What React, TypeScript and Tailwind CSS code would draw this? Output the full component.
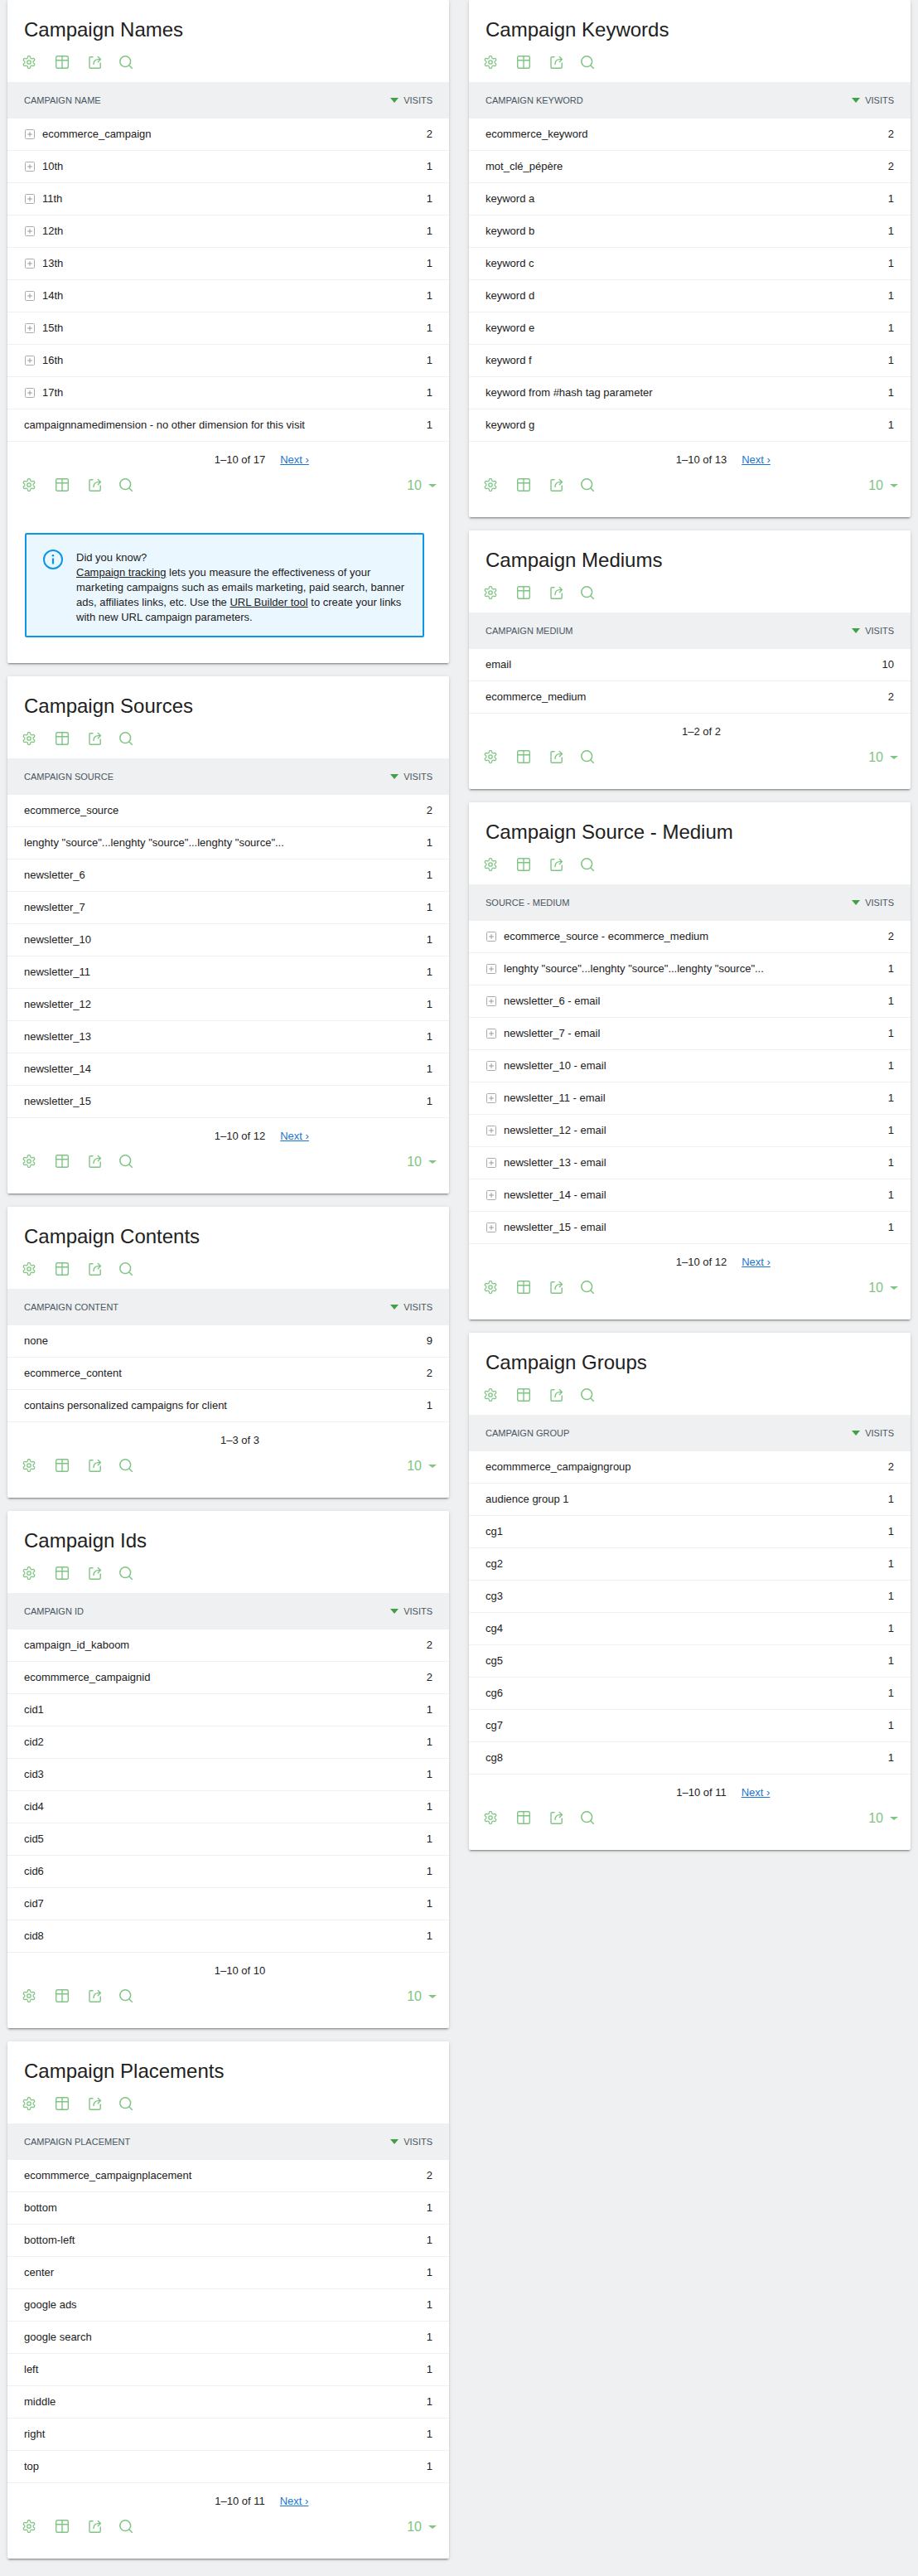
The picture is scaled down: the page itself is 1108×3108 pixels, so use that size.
import React from "react";

type Row = [string, number];
type CardProps = {
  title: string;
  dim: string;
  rows: Row[];
  range: string;
  next?: boolean;
  plus?: number;
  info?: boolean;
};

function Gear() {
  return (
    <svg width="16" height="16" viewBox="1.2 1.2 21.6 21.6" fill="none" stroke="#7fc583" strokeWidth="1.7" strokeLinecap="round" strokeLinejoin="round">
      <path d="M12.22 2h-.44a2 2 0 0 0-2 2v.18a2 2 0 0 1-1 1.73l-.43.25a2 2 0 0 1-2 0l-.15-.08a2 2 0 0 0-2.73.73l-.22.38a2 2 0 0 0 .73 2.73l.15.1a2 2 0 0 1 1 1.72v.51a2 2 0 0 1-1 1.74l-.15.09a2 2 0 0 0-.73 2.73l.22.38a2 2 0 0 0 2.73.73l.15-.08a2 2 0 0 1 2 0l.43.25a2 2 0 0 1 1 1.73V20a2 2 0 0 0 2 2h.44a2 2 0 0 0 2-2v-.18a2 2 0 0 1 1-1.73l.43-.25a2 2 0 0 1 2 0l.15.08a2 2 0 0 0 2.73-.73l.22-.39a2 2 0 0 0-.73-2.73l-.15-.08a2 2 0 0 1-1-1.74v-.5a2 2 0 0 1 1-1.74l.15-.09a2 2 0 0 0 .73-2.73l-.22-.38a2 2 0 0 0-2.73-.73l-.15.08a2 2 0 0 1-2 0l-.43-.25a2 2 0 0 1-1-1.73V4a2 2 0 0 0-2-2z" />
      <circle cx="12" cy="12" r="3" />
    </svg>
  );
}

function TableIcon() {
  return (
    <svg width="16" height="16" viewBox="0 0 16 16" fill="none" stroke="#7fc583" strokeWidth="1.4">
      <rect x="0.7" y="0.7" width="14.6" height="14.6" rx="1.5" />
      <path d="M0.7 5.7H15.3M8 0.7V15.3" />
    </svg>
  );
}

function ShareIcon() {
  return (
    <svg width="16" height="16" viewBox="0 0 16 16" fill="none" stroke="#7fc583" strokeWidth="1.4" strokeLinecap="round" strokeLinejoin="round">
      <path d="M5 1.7H2.2a1.2 1.2 0 0 0-1.2 1.2V14a1.2 1.2 0 0 0 1.2 1.2H13a1.2 1.2 0 0 0 1.2-1.2V9" />
      <path d="M6 10.5C6 7 8 4.6 11.5 4.6H14" />
      <path d="M11.3 1.5L14.4 4.6L11.3 7.7" />
    </svg>
  );
}

function SearchIcon() {
  return (
    <svg width="16" height="16" viewBox="0 0 16 16" fill="none" stroke="#7fc583" strokeWidth="1.5" strokeLinecap="round" className="ml-[-3px]">
      <circle cx="7.2" cy="7.2" r="6.4" />
      <path d="M12 12L15.5 15.5" />
    </svg>
  );
}

function Icons() {
  return (
    <div className="flex h-4 gap-6 pl-[18px]">
      <Gear />
      <TableIcon />
      <ShareIcon />
      <SearchIcon />
    </div>
  );
}

function PlusBox() {
  return (
    <svg width="12" height="12" viewBox="0 0 12 12" fill="none" className="ml-px mr-[9px] shrink-0">
      <rect x="0.5" y="0.5" width="11" height="11" rx="1" stroke="#ababab" />
      <path d="M6 3.2V8.8M3.2 6H8.8" stroke="#999999" strokeWidth="1" />
    </svg>
  );
}

function Card({ title, dim, rows, range, next, plus = 0, info }: CardProps) {
  return (
    <section className="bg-white rounded-[2px] shadow-[0_2px_2px_0_rgba(0,0,0,0.14),0_3px_1px_-2px_rgba(0,0,0,0.2),0_1px_5px_0_rgba(0,0,0,0.12)]">
      <h2 className="pt-[21px] pl-5 mb-4 text-[24px] leading-[30px] font-normal text-[#212121]">{title}</h2>
      <div className="pb-4">
        <Icons />
      </div>
      <div className="flex h-[44px] items-center justify-between bg-[#eef0f1] px-5 text-[11px] uppercase text-[#4a5661]">
        <span>{dim}</span>
        <span className="flex items-center">
          <span className="mr-[6px] h-0 w-0 border-x-[5px] border-t-[6px] border-x-transparent border-t-[#43a047]" />
          Visits
        </span>
      </div>
      {rows.map(([label, value], i) => (
        <div key={label} className="flex h-[39px] items-center justify-between border-b border-[#eef0f1] px-5 text-[13px] text-[#212121]">
          <span className="flex items-center">
            {i < plus && <PlusBox />}
            {label}
          </span>
          <span>{value}</span>
        </div>
      ))}
      <div className="grid grid-cols-[1fr_auto_1fr] pl-7 pt-[13px] text-[13px] leading-[18px] text-[#212121]">
        <span />
        <span>{range}</span>
        {next ? (
          <span className="pl-[18px]">
            <a className="text-[#1976d2] underline">Next ›</a>
          </span>
        ) : (
          <span />
        )}
      </div>
      <div className="mt-[13px] flex h-4 items-center justify-between">
        <Icons />
        <div className="flex items-center pr-[15px] pt-[2px]">
          <span className="text-[16px] leading-4 text-[#7fc583]">10</span>
          <span className="ml-[8px] h-0 w-0 border-x-[5px] border-t-[4px] border-x-transparent border-t-[#7fc583]" />
        </div>
      </div>
      {info && (
        <div className="ml-[21px] mr-[30px] mt-[50px] flex h-[126px] rounded-[2px] border-2 border-[#0d96e8] bg-[#ebf7fe] pt-[19px] pr-[13px] text-[13px] leading-[18px] text-[#212121]">
          <svg width="24" height="24" viewBox="0 0 24 24" fill="none" className="ml-[20px] mr-[16px] mt-[-1px] shrink-0">
            <circle cx="12" cy="12" r="11" stroke="#0d96e8" strokeWidth="2" />
            <path d="M12 10.5V17.5" stroke="#0d96e8" strokeWidth="2.2" />
            <circle cx="12" cy="7.3" r="1.3" fill="#0d96e8" />
          </svg>
          <p>
            Did you know?
            <br />
            <a className="underline">Campaign tracking</a> lets you measure the effectiveness of your marketing campaigns such as emails marketing, paid search, banner ads, affiliates links, etc. Use the <a className="underline">URL Builder tool</a> to create your links with new URL campaign parameters.
          </p>
        </div>
      )}
      <div className="h-[31px]" />
    </section>
  );
}

const r = (items: string[], counts: number[] = []): Row[] => items.map((s, i) => [s, counts[i] ?? 1]);

const long = 'lenghty "source"...lenghty "source"...lenghty "source"...';

export default function App() {
  return (
    <div className="min-h-[3108px] bg-[#eef0f1] px-[9px] font-['Liberation_Sans',Arial,sans-serif]">
      <div className="grid grid-cols-2 items-start gap-6">
        <div className="flex flex-col gap-4">
          <Card
            title="Campaign Names"
            dim="Campaign Name"
            rows={r(["ecommerce_campaign", "10th", "11th", "12th", "13th", "14th", "15th", "16th", "17th", "campaignnamedimension - no other dimension for this visit"], [2])}
            range="1–10 of 17"
            next
            plus={9}
            info
          />
          <Card
            title="Campaign Sources"
            dim="Campaign Source"
            rows={r(["ecommerce_source", long, "newsletter_6", "newsletter_7", "newsletter_10", "newsletter_11", "newsletter_12", "newsletter_13", "newsletter_14", "newsletter_15"], [2])}
            range="1–10 of 12"
            next
          />
          <Card
            title="Campaign Contents"
            dim="Campaign Content"
            rows={r(["none", "ecommerce_content", "contains personalized campaigns for client"], [9, 2, 1])}
            range="1–3 of 3"
          />
          <Card
            title="Campaign Ids"
            dim="Campaign ID"
            rows={r(["campaign_id_kaboom", "ecommmerce_campaignid", "cid1", "cid2", "cid3", "cid4", "cid5", "cid6", "cid7", "cid8"], [2, 2])}
            range="1–10 of 10"
          />
          <Card
            title="Campaign Placements"
            dim="Campaign Placement"
            rows={r(["ecommmerce_campaignplacement", "bottom", "bottom-left", "center", "google ads", "google search", "left", "middle", "right", "top"], [2])}
            range="1–10 of 11"
            next
          />
        </div>
        <div className="flex flex-col gap-4">
          <Card
            title="Campaign Keywords"
            dim="Campaign Keyword"
            rows={r(["ecommerce_keyword", "mot_clé_pépère", "keyword a", "keyword b", "keyword c", "keyword d", "keyword e", "keyword f", "keyword from #hash tag parameter", "keyword g"], [2, 2])}
            range="1–10 of 13"
            next
          />
          <Card
            title="Campaign Mediums"
            dim="Campaign Medium"
            rows={r(["email", "ecommerce_medium"], [10, 2])}
            range="1–2 of 2"
          />
          <Card
            title="Campaign Source - Medium"
            dim="Source - Medium"
            rows={r(["ecommerce_source - ecommerce_medium", long, "newsletter_6 - email", "newsletter_7 - email", "newsletter_10 - email", "newsletter_11 - email", "newsletter_12 - email", "newsletter_13 - email", "newsletter_14 - email", "newsletter_15 - email"], [2])}
            range="1–10 of 12"
            next
            plus={10}
          />
          <Card
            title="Campaign Groups"
            dim="Campaign Group"
            rows={r(["ecommmerce_campaigngroup", "audience group 1", "cg1", "cg2", "cg3", "cg4", "cg5", "cg6", "cg7", "cg8"], [2])}
            range="1–10 of 11"
            next
          />
        </div>
      </div>
    </div>
  );
}
